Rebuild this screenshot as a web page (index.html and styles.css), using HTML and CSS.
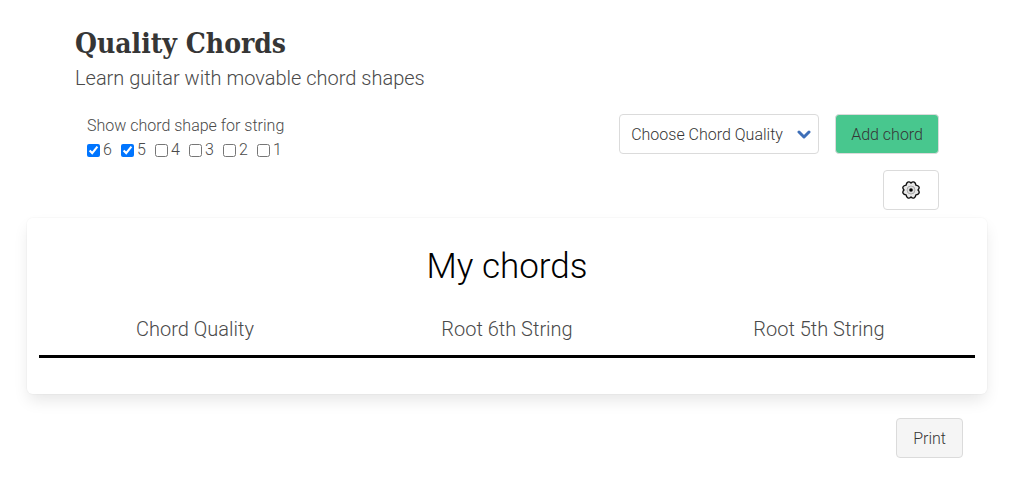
FILE: index.html
```html
<!DOCTYPE html>
<html lang="en">
<head>
    <meta charset="UTF-8">
    <meta name="viewport" content="width=device-width, initial-scale=1.0">
    <title>Quality Chords</title>
    <link rel="stylesheet" href="styles.css">
</head>
<body>
    <main class="container">
        <header class="header">
            <h1 class="title">Quality Chords</h1>
            <p class="subtitle">Learn guitar with movable chord shapes</p>
        </header>

        <div class="controls">
            <fieldset class="strings">
                <legend>Show chord shape for string</legend>
                <div class="string-list">
                    <label><input type="checkbox" name="string" value="6" checked>6</label>
                    <label><input type="checkbox" name="string" value="5" checked>5</label>
                    <label><input type="checkbox" name="string" value="4">4</label>
                    <label><input type="checkbox" name="string" value="3">3</label>
                    <label><input type="checkbox" name="string" value="2">2</label>
                    <label><input type="checkbox" name="string" value="1">1</label>
                </div>
            </fieldset>
            <div class="actions">
                <div class="select">
                    <select id="quality" aria-label="Chord quality">
                        <option>Choose Chord Quality</option>
                        <option>Major</option>
                        <option>Minor</option>
                    </select>
                    <svg class="arrow" viewBox="0 0 14 10" aria-hidden="true">
                        <path d="M2 2l5 5 5-5" />
                    </svg>
                </div>
                <button type="button" class="button is-success">Add chord</button>
            </div>
        </div>

        <div class="settings">
            <button type="button" class="button is-icon" aria-label="Settings">
                <svg class="gear" viewBox="0 0 18 18" aria-hidden="true">
                    <path class="gear-body" d="M9 2Q10.6 .3 12.2 1.1Q13.6 1.8 13.9 4.1Q16.2 4.4 16.9 5.8Q17.7 7.4 16 9Q17.7 10.6 16.9 12.2Q16.2 13.6 13.9 13.9Q13.6 16.2 12.2 16.9Q10.6 17.7 9 16Q7.4 17.7 5.8 16.9Q4.4 16.2 4.1 13.9Q1.8 13.6 1.1 12.2Q.3 10.6 2 9Q.3 7.4 1.1 5.8Q1.8 4.4 4.1 4.1Q4.4 1.8 5.8 1.1Q7.4 .3 9 2Z" />
                    <circle class="gear-ring" cx="9" cy="9" r="4" />
                    <circle class="gear-hole" cx="9" cy="9" r="1.8" />
                </svg>
            </button>
        </div>

        <section class="box">
            <h2>My chords</h2>
            <table class="chords">
                <thead>
                    <tr>
                        <th scope="col">Chord Quality</th>
                        <th scope="col">Root 6th String</th>
                        <th scope="col">Root 5th String</th>
                    </tr>
                </thead>
            </table>
        </section>

        <div class="footer">
            <button type="button" class="button is-light">Print</button>
        </div>
    </main>
</body>
</html>
```
FILE: styles.css
```css
* {
    box-sizing: border-box;
}
body {
    margin: 0;
    font-family: Roboto, sans-serif;
    font-size: 16px;
    font-weight: 300;
    line-height: 24px;
    color: #363636;
    background-color: #fff;
}
.container {
    max-width: 1017px;
    margin: 0 auto;
    padding: 24px 30px 20px 27px;
}

.header {
    padding: 0 48px;
}
.title {
    margin: 0;
    font-family: "DejaVu Serif Condensed", "DejaVu Serif", serif;
    font-size: 28px;
    font-weight: bold;
    line-height: 40px;
}
.subtitle {
    margin: 0;
    font-size: 20px;
    line-height: 28px;
    color: #4a4a4a;
}

.controls {
    display: flex;
    justify-content: space-between;
    padding: 22px 48px 0 60px;
}
.strings {
    margin: 0;
    padding: 0;
    border: none;
    color: #4a4a4a;
}
.strings legend {
    padding: 0;
}
.string-list {
    display: flex;
}
.string-list label {
    display: flex;
    align-items: center;
    gap: 3px;
    width: 34px;
}
.string-list input {
    width: 13px;
    height: 13px;
    margin: 0;
}
.actions {
    display: flex;
    gap: 16px;
}

.select {
    position: relative;
    height: 40px;
}
.select select {
    appearance: none;
    width: 200px;
    height: 40px;
    padding: 2px 32px 0 11px;
    font: inherit;
    color: #363636;
    background-color: #fff;
    border: 1px solid #dbdbdb;
    border-radius: 4px;
}
.arrow {
    position: absolute;
    top: 16px;
    right: 8px;
    width: 14px;
    height: 10px;
    pointer-events: none;
}
.arrow path {
    fill: none;
    stroke: #3e6fb8;
    stroke-width: 3;
    stroke-linecap: round;
    stroke-linejoin: round;
}

.button {
    height: 40px;
    padding: 2px 16px 0;
    font: inherit;
    color: #363636;
    background-color: #fff;
    border: 1px solid #dbdbdb;
    border-radius: 4px;
    cursor: pointer;
}
.button.is-success {
    padding: 2px 15px 0;
    background-color: #48c78e;
}
.button.is-light {
    background-color: #f5f5f5;
}
.button.is-icon {
    display: flex;
    align-items: center;
    justify-content: center;
    width: 56px;
    padding: 0;
}

.settings {
    display: flex;
    justify-content: flex-end;
    padding: 8px 48px;
}
.gear {
    width: 18px;
    height: 18px;
}
.gear-body {
    fill: #e8e8e8;
    stroke: #111;
    stroke-width: 1.4;
    stroke-linejoin: round;
}
.gear-ring {
    fill: #ddd;
    stroke: #aaa;
    stroke-width: 1;
}
.gear-hole {
    fill: #000;
}

.box {
    padding: 25px 12px 36px;
    border-radius: 6px;
    box-shadow: 0 8px 16px -2px rgba(10, 10, 10, 0.1), 0 0 0 1px rgba(10, 10, 10, 0.02);
}
.box h2 {
    margin: 0;
    font-size: 35px;
    font-weight: 300;
    line-height: 48px;
    text-align: center;
    color: #000;
}
.chords {
    width: 100%;
    table-layout: fixed;
    border-collapse: collapse;
}
.chords th {
    padding: 24px 0 12px;
    font-size: 20px;
    font-weight: 300;
    line-height: 28px;
    text-align: center;
    color: #4a4a4a;
    border-bottom: 3px solid #000;
}

.footer {
    display: flex;
    justify-content: flex-end;
    padding: 24px 24px 0;
}
```
